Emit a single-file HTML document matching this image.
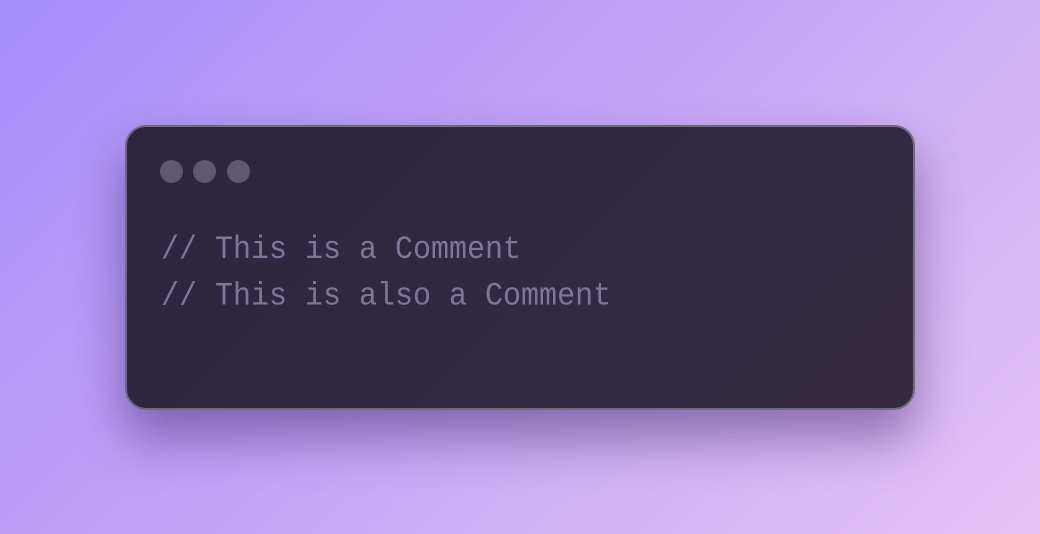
<!DOCTYPE html>
<html><head><meta charset="utf-8"><style>
html,body{margin:0;padding:0;}
body{width:1040px;height:534px;overflow:hidden;position:relative;
background:linear-gradient(135deg,#a58ffa 0%,#bb9ef8 35%,#d2b2f5 70%,#e6c2f6 100%);}
.card{position:absolute;left:125px;top:125px;width:786px;height:281px;border-radius:21px;
background:linear-gradient(135deg,#2b2540 0%,#302a42 60%,#352b41 100%);
border:2px solid #6f6a7c;box-sizing:content-box;
box-shadow:0 28px 50px rgba(50,25,90,0.45);}
.dot{position:absolute;top:33px;width:23px;height:23px;border-radius:50%;background:#5f5873;}
.code{position:absolute;left:34px;top:101px;font-family:"Liberation Mono",monospace;font-size:30px;
line-height:42.6px;color:#807599;white-space:pre;transform:scaleY(1.08);transform-origin:0 0;}
</style></head><body>
<div class="card">
<div class="dot" style="left:33px"></div>
<div class="dot" style="left:66px"></div>
<div class="dot" style="left:100px"></div>
<div class="code">// This is a Comment
// This is also a Comment</div>
</div>
</body></html>
